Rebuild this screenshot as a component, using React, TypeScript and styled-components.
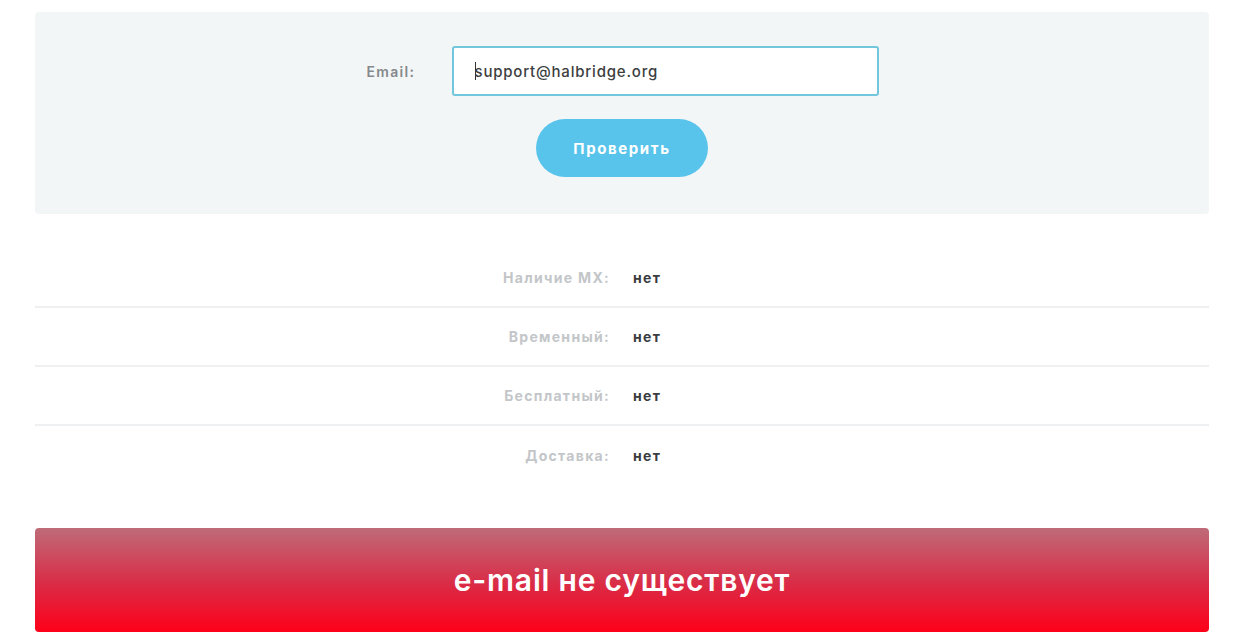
import React from "react";
import styled, { createGlobalStyle } from "styled-components";

const Global = createGlobalStyle`
  html, body { margin: 0; padding: 0; background: #ffffff; }
  body { font-family: "Inter", "Open Sans", sans-serif; }
  * { box-sizing: border-box; }
`;

const Page = styled.div`
  width: 1174px;
  margin-left: 35px;
  padding-top: 12px;
`;

const Panel = styled.div`
  background: #f3f6f7;
  border-radius: 4px;
  padding: 34px 0 37px;
  display: flex;
  flex-direction: column;
  align-items: center;
  gap: 23px;
`;

const FormRow = styled.div`
  display: flex;
  align-items: center;
  gap: 38px;
`;

const Label = styled.label`
  font-size: 14px;
  font-weight: 600;
  color: #85898c;
  width: 47px;
  white-space: nowrap;
  letter-spacing: 1.3px;
  margin-left: 1px;
`;

const Input = styled.div`
  width: 427px;
  height: 50px;
  background: #ffffff;
  border: 2px solid #72c7dc;
  border-radius: 3px;
  display: flex;
  align-items: center;
  padding-left: 21px;
  font-size: 15px;
  font-weight: 500;
  color: #3c3e40;
  letter-spacing: 0.8px;
`;

const Caret = styled.span`
  display: inline-block;
  width: 1px;
  height: 18px;
  background: #333;
  margin-right: -1px;
`;

const Button = styled.button`
  width: 172px;
  height: 58px;
  border: none;
  border-radius: 29px;
  background: #58c4eb;
  color: #ffffff;
  font-family: "Inter", "Open Sans", sans-serif;
  font-size: 15px;
  font-weight: 700;
  letter-spacing: 1.6px;
  padding: 0;
`;

const Results = styled.div`
  margin-top: 35px;
`;

const Row = styled.div<{ $last?: boolean }>`
  display: grid;
  grid-template-columns: 1fr 1fr;
  height: 59px;
  align-items: center;
  border-bottom: ${(p) => (p.$last ? "none" : "2px solid #eef0f1")};
`;

const Key = styled.div`
  text-align: right;
  padding-right: 12px;
  font-size: 14px;
  font-weight: 700;
  color: #c3c6c9;
  letter-spacing: 1.3px;
`;

const Value = styled.div`
  padding-left: 11px;
  font-size: 14px;
  font-weight: 700;
  color: #3a3c3f;
  letter-spacing: 1.3px;
`;

const Banner = styled.div`
  margin-top: 43px;
  height: 104px;
  border-radius: 4px;
  background: linear-gradient(to bottom, #be6b78 0%, #db2a45 55%, #ff0019 100%);
  display: flex;
  align-items: center;
  justify-content: center;
  color: #ffffff;
  font-size: 30px;
  font-weight: 600;
  letter-spacing: 0.8px;
`;

const rows = [
  ["Наличие MX:", "нет"],
  ["Временный:", "нет"],
  ["Бесплатный:", "нет"],
  ["Доставка:", "нет"],
];

export default function App() {
  return (
    <>
      <Global />
      <Page>
        <Panel>
          <FormRow>
            <Label>Email:</Label>
            <Input>
              <Caret />
              support@halbridge.org
            </Input>
          </FormRow>
          <Button>Проверить</Button>
        </Panel>
        <Results>
          {rows.map(([k, v], i) => (
            <Row key={k} $last={i === rows.length - 1}>
              <Key>{k}</Key>
              <Value>{v}</Value>
            </Row>
          ))}
        </Results>
        <Banner>e-mail не существует</Banner>
      </Page>
    </>
  );
}
